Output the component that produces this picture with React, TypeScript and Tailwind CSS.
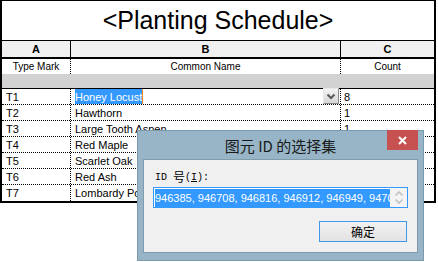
import React from "react";

const rows: [string, string, string][] = [
  ["T1", "Honey Locust", "8"],
  ["T2", "Hawthorn", "1"],
  ["T3", "Large Tooth Aspen", "1"],
  ["T4", "Red Maple", "1"],
  ["T5", "Scarlet Oak", "1"],
  ["T6", "Red Ash", "1"],
  ["T7", "Lombardy Poplar", "1"],
];

function DropButton() {
  return (
    <div className="w-[16px] h-[16px] mt-[-1px] mr-[1px] bg-gradient-to-b from-[#f4f4f4] to-[#d6d6d6] border border-t-[#e8e8e8] border-l-[#e8e8e8] border-r-[#8a8a8a] border-b-[#8a8a8a] flex items-center justify-center">
      <svg width="10" height="8" viewBox="0 0 10 8">
        <path d="M1.5 2.5 L5 6 L8.5 2.5" fill="none" stroke="#5a5a5a" strokeWidth="2" />
      </svg>
    </div>
  );
}

export default function App() {
  return (
    <div className="relative w-[438px] h-[262px] bg-white overflow-hidden font-['Liberation_Sans',Arial,sans-serif] text-black">
      {/* Schedule table */}
      <div className="w-[436px] border-t border-l-2 border-r-2 border-b-2 border-black flex flex-col">
        <div className="h-[40px] border-b border-black flex items-center justify-center">
          <span className="text-[25px] leading-none mt-[-1px]">&lt;Planting Schedule&gt;</span>
        </div>
        {/* Column letters */}
        <div className="flex h-[18px] border-b-2 border-black bg-[#f0f0f0] text-[11px] font-bold leading-[16px]">
          <div className="w-[69px] border-r border-black text-center">A</div>
          <div className="w-[270px] border-r border-black text-center">B</div>
          <div className="flex-1 text-center">C</div>
        </div>
        {/* Header names */}
        <div className="flex h-[15px] text-[10px] leading-[15px]">
          <div className="w-[69px] border-r border-dotted border-black text-center">Type Mark</div>
          <div className="w-[270px] border-r border-dotted border-black text-center">Common Name</div>
          <div className="flex-1 text-center">Count</div>
        </div>
        <div className="h-[15px] bg-[#d2d2d2] border-b border-black" />
        {rows.map((r, i) => (
          <div
            key={r[0]}
            className={
              i < rows.length - 1
                ? "flex h-[16px] border-b border-dotted border-black text-[11px] leading-[15px]"
                : "flex h-[16px] text-[11px] leading-[15px]"
            }
          >
            <div className="w-[69px] border-r border-dotted border-black pl-[4px] pt-[1px]">{r[0]}</div>
            <div className="w-[270px] border-r border-dotted border-black pl-[4px] flex items-start justify-between">
              {i === 0 ? (
                <>
                  <div className="flex h-[15px]">
                    <span className="bg-[#3399ff] text-white pt-[1px] h-[15px]">{r[1]}</span>
                    <span className="w-[1px] h-[15px] bg-[#ff8c1a]" />
                  </div>
                  <DropButton />
                </>
              ) : (
                <span className="pt-[1px]">{r[1]}</span>
              )}
            </div>
            <div className="flex-1 pl-[3px] pt-[1px]">{r[2]}</div>
          </div>
        ))}
      </div>

      {/* Dialog */}
      <div className="absolute left-[137px] top-[130px] w-[287px] h-[131px] bg-[#97b5c7] border border-[#7a9aae] flex flex-col">
        <div className="relative h-[28px] flex items-center justify-center">
          <span className="text-[15px] leading-none text-[#1a1a1a] font-['Noto_Sans_CJK_SC',sans-serif] mt-[1px]">
            图元 ID 的选择集
          </span>
          <div className="absolute right-[5px] top-[-1px] w-[31px] h-[20px] bg-[#c75050] flex items-center justify-center">
            <svg width="9" height="9" viewBox="0 0 9 9">
              <path d="M1 1 L8 8 M8 1 L1 8" stroke="white" strokeWidth="2" />
            </svg>
          </div>
        </div>
        <div className="mx-[5px] h-[94px] bg-[#f0f0f0] border border-[#7f9cad] flex flex-col px-[9px] pt-[9px]">
          <div className="h-[16px] ml-[2px] flex items-center text-black">
            <span className="font-['Liberation_Mono',monospace] text-[10px]">ID&nbsp;</span>
            <span className="font-['Noto_Sans_CJK_SC',sans-serif] text-[12px] leading-none">号</span>
            <span className="font-['Liberation_Mono',monospace] text-[10px]">
              (<span className="underline">I</span>):
            </span>
          </div>
          <div className="mt-[2px] h-[21px] border border-[#3399ff] bg-white flex">
            <div className="flex-1 overflow-hidden pl-[1px] pt-[1px]">
              <div className="h-[18px] bg-[#3399ff] text-white text-[11px] leading-[18px] whitespace-nowrap">
                946385, 946708, 946816, 946912, 946949, 9470
              </div>
            </div>
            <div className="w-[17px] bg-[#f4f4f4] flex flex-col items-center justify-center gap-[1px]">
              <svg width="10" height="7" viewBox="0 0 10 7">
                <path d="M1.5 5.5 L5 2 L8.5 5.5" fill="none" stroke="#c2c2c2" strokeWidth="1.6" />
              </svg>
              <svg width="10" height="7" viewBox="0 0 10 7">
                <path d="M1.5 1.5 L5 5 L8.5 1.5" fill="none" stroke="#c2c2c2" strokeWidth="1.6" />
              </svg>
            </div>
          </div>
          <div className="mt-[13px] self-end mr-[1px] w-[88px] h-[21px] border border-[#3f98e8] bg-gradient-to-b from-[#f2f2f2] to-[#e3e3e3] flex items-center justify-center">
            <span className="text-[12px] leading-none font-['Noto_Sans_CJK_SC',sans-serif] text-black">确定</span>
          </div>
        </div>
      </div>
    </div>
  );
}
